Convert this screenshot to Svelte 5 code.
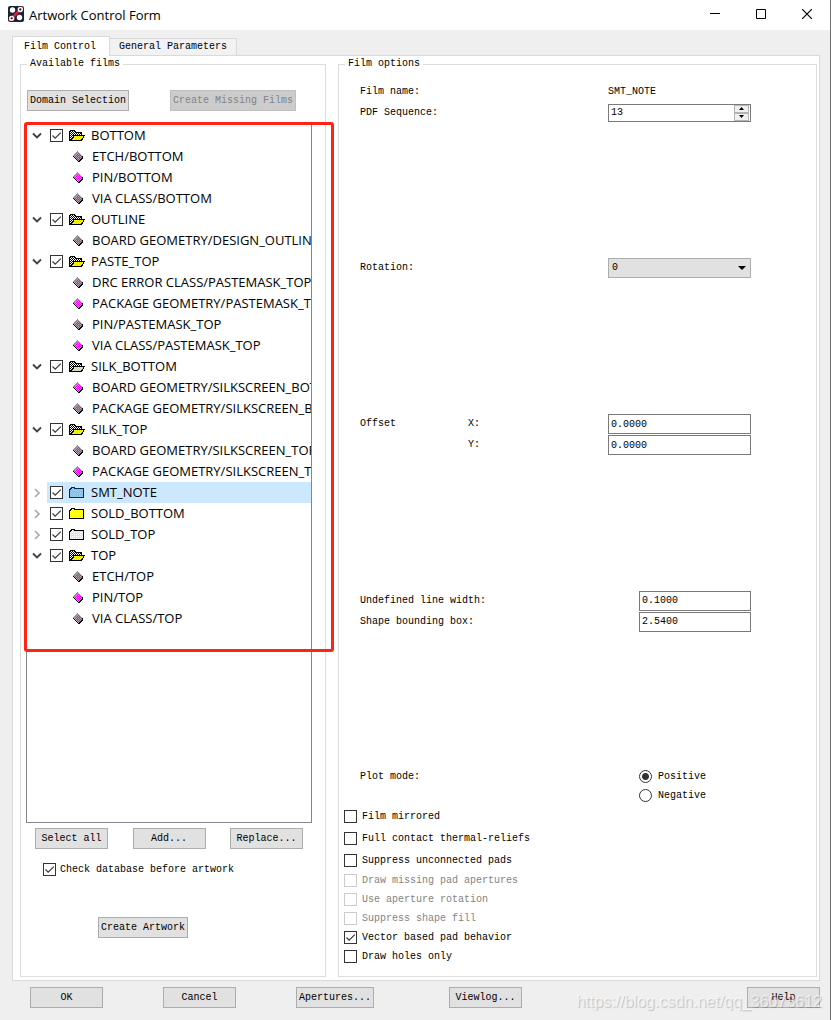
<script>
  let films = $state([
    { name: 'BOTTOM', open: true, checked: true, layers: ['ETCH/BOTTOM', 'PIN/BOTTOM', 'VIA CLASS/BOTTOM'] },
    { name: 'OUTLINE', open: true, checked: true, layers: ['BOARD GEOMETRY/DESIGN_OUTLINE'] },
    { name: 'PASTE_TOP', open: true, checked: true, layers: ['DRC ERROR CLASS/PASTEMASK_TOP', 'PACKAGE GEOMETRY/PASTEMASK_TOP', 'PIN/PASTEMASK_TOP', 'VIA CLASS/PASTEMASK_TOP'] },
    { name: 'SILK_BOTTOM', open: true, checked: true, layers: ['BOARD GEOMETRY/SILKSCREEN_BOTTOM', 'PACKAGE GEOMETRY/SILKSCREEN_BOTTOM'] },
    { name: 'SILK_TOP', open: true, checked: true, layers: ['BOARD GEOMETRY/SILKSCREEN_TOP', 'PACKAGE GEOMETRY/SILKSCREEN_TOP'] },
    { name: 'SMT_NOTE', open: false, checked: true, layers: [] },
    { name: 'SOLD_BOTTOM', open: false, checked: true, layers: [] },
    { name: 'SOLD_TOP', open: false, checked: true, layers: [] },
    { name: 'TOP', open: true, checked: true, layers: ['ETCH/TOP', 'PIN/TOP', 'VIA CLASS/TOP'] }
  ]);
  let selected = $state('SMT_NOTE');
  let sequence = $state(13);
  let plotMode = $state('Positive');
  let options = $state([
    { label: 'Film mirrored', checked: false, disabled: false, tall: true },
    { label: 'Full contact thermal-reliefs', checked: false, disabled: false, tall: true },
    { label: 'Suppress unconnected pads', checked: false, disabled: false, tall: true },
    { label: 'Draw missing pad apertures', checked: false, disabled: true },
    { label: 'Use aperture rotation', checked: false, disabled: true },
    { label: 'Suppress shape fill', checked: false, disabled: true },
    { label: 'Vector based pad behavior', checked: true, disabled: false },
    { label: 'Draw holes only', checked: false, disabled: false }
  ]);
</script>

<svg class="defs" width="0" height="0" aria-hidden="true">
  <defs>
    <pattern id="dither-back" width="2" height="2" patternUnits="userSpaceOnUse">
      <rect width="2" height="2" fill="#000" /><rect width="1" height="1" fill="#fff" /><rect x="1" y="1" width="1" height="1" fill="#fff" />
    </pattern>
    <pattern id="dither-open" width="2" height="2" patternUnits="userSpaceOnUse">
      <rect width="2" height="2" fill="#c8c8b4" /><rect width="1" height="1" fill="#ffff00" /><rect x="1" y="1" width="1" height="1" fill="#ffff00" />
    </pattern>
    <pattern id="dither-closed" width="2" height="2" patternUnits="userSpaceOnUse">
      <rect width="2" height="2" fill="#fff" /><rect width="1" height="1" fill="#ffff00" /><rect x="1" y="1" width="1" height="1" fill="#ffff00" />
    </pattern>
    <pattern id="dither-selected" width="2" height="2" patternUnits="userSpaceOnUse">
      <rect width="2" height="2" fill="#99ccee" /><rect width="1" height="1" fill="#99cc66" /><rect x="1" y="1" width="1" height="1" fill="#99cc66" />
    </pattern>
    <pattern id="dither-layer" width="2" height="2" patternUnits="userSpaceOnUse">
      <rect width="2" height="2" fill="#ff00ff" /><rect width="1" height="1" fill="#b4a4b4" /><rect x="1" y="1" width="1" height="1" fill="#b4a4b4" />
    </pattern>
  </defs>
</svg>

<div class="window">
  <header class="titlebar">
    <svg width="16" height="16" viewBox="0 0 16 16" aria-hidden="true">
      <rect width="16" height="16" rx="2" fill="#1d2333" />
      <path d="M1 15L15 1" stroke="#d8203c" stroke-width="2.500" fill="none" />
      <circle cx="4.500" cy="4" r="2.700" fill="#fff" />
      <circle cx="12.300" cy="3.500" r="1.900" fill="#1d2333" stroke="#fff" stroke-width="1.500" />
      <circle cx="3.700" cy="12.300" r="1.900" fill="#1d2333" stroke="#fff" stroke-width="1.500" />
      <circle cx="11.500" cy="11.500" r="2.700" fill="#fff" />
    </svg>
    <h1>Artwork Control Form</h1>
    <div class="controls">
      <button aria-label="Minimize"><svg width="10" height="10"><path d="M0 4.500H10" stroke="#000" /></svg></button>
      <button aria-label="Maximize"><svg width="10" height="10"><path d="M.5 .5H9.500V9.500H.5Z" stroke="#000" fill="none" /></svg></button>
      <button aria-label="Close"><svg width="10" height="10"><path d="M0 0L10 10M10 0L0 10" stroke="#000" stroke-width="1.200" /></svg></button>
    </div>
  </header>

  <main>
    <nav class="tabs" aria-label="Sections">
      <button class="tab active">Film Control</button>
      <button class="tab">General Parameters</button>
    </nav>

    <div class="panel">
      <fieldset class="films">
        <legend>Available films</legend>
        <div class="top-actions">
          <button class="btn">Domain Selection</button>
          <button class="btn" disabled>Create Missing Films</button>
        </div>

        <div class="tree-wrap">
          <ul class="tree">
            {#each films as film}
              <li>
                <div class="film">
                  <button class="twisty" aria-label={film.open ? 'Collapse' : 'Expand'} onclick={() => (film.open = !film.open)}>
                    <svg width="10" height="10" viewBox="0 0 10 10">
                      {#if film.open}
                        <path d="M1 2.500L5 6.500L9 2.500" fill="none" stroke="#404040" stroke-width="1.800" />
                      {:else}
                        <path d="M3 1L7 5L3 9" fill="none" stroke="#a6a6a6" stroke-width="1.600" />
                      {/if}
                    </svg>
                  </button>
                  <div class="item" class:selected={film.name === selected}>
                    <input type="checkbox" aria-label={film.name} bind:checked={film.checked} />
                    <svg width="16" height="14" viewBox="0 0 16 14" shape-rendering="crispEdges" aria-hidden="true">
                      {#if film.open}
                        <path d="M.5 11.500V2.500H1.500V1.500H5.500V2.500H6.500V3.500H12.500V6.500H5L1 11.500Z" fill="url(#dither-back)" stroke="#000" />
                        <path d="M1.500 11.500L5.500 6.500H15.500L12.500 11.500Z" fill="url(#dither-open)" stroke="#000" />
                      {:else}
                        <path d="M.5 11.500V3.500H1.500V2.500H2.500V1.500H5.500V2.500H6.500V2.500H14.500V11.500Z" fill={film.name === selected ? 'url(#dither-selected)' : 'url(#dither-closed)'} stroke={film.name === selected ? '#002a50' : '#000'} />
                      {/if}
                    </svg>
                    <button class="name" onclick={() => (selected = film.name)}>{film.name}</button>
                  </div>
                </div>
                {#if film.open}
                  <ul>
                    {#each film.layers as layer}
                      <li class="layer">
                        <svg width="10" height="12" viewBox="0 0 10 12" shape-rendering="crispEdges" aria-hidden="true">
                          <path d="M0 4L5 9L9 5H10V7L6 11H5L0 6Z" fill="#000" />
                          <path d="M0 4L4 0L9 5V6L5 10L0 5Z" fill="url(#dither-layer)" />
                          <path d="M0 4L4 0L5 1L1 5Z" fill="#909090" />
                        </svg>
                        <span>{layer}</span>
                      </li>
                    {/each}
                  </ul>
                {/if}
              </li>
            {/each}
          </ul>
          <div class="highlight"></div>
        </div>

        <div class="list-actions">
          <button class="btn std">Select all</button>
          <button class="btn std">Add...</button>
          <button class="btn std">Replace...</button>
        </div>
        <label class="check database"><input type="checkbox" checked />Check database before artwork</label>
        <button class="btn create">Create Artwork</button>
      </fieldset>

      <fieldset class="options">
        <legend>Film options</legend>
        <div class="sections">
          <div class="section">
            <span class="caption">Film name:</span>
            <span class="value">SMT_NOTE</span>
            <label class="caption" for="sequence">PDF Sequence:</label>
            <div class="value spin">
              <input id="sequence" type="number" bind:value={sequence} />
              <div class="steps">
                <button aria-label="Increase" onclick={() => sequence++}><svg width="5" height="3"><path d="M0 3L2.500 0L5 3Z" /></svg></button>
                <button aria-label="Decrease" onclick={() => sequence--}><svg width="5" height="3"><path d="M0 0L2.500 3L5 0Z" /></svg></button>
              </div>
            </div>
          </div>

          <div class="section">
            <label class="caption" for="rotation">Rotation:</label>
            <div class="value select">
              <select id="rotation"><option>0</option><option>90</option><option>180</option><option>270</option></select>
              <svg width="8" height="4" aria-hidden="true"><path d="M0 0H8L4 4Z" /></svg>
            </div>
          </div>

          <div class="section">
            <span>Offset</span>
            <label class="axis" for="offset-x">X:</label>
            <input class="value" id="offset-x" type="text" value="0.0000" />
            <label class="axis" for="offset-y">Y:</label>
            <input class="value" id="offset-y" type="text" value="0.0000" />
          </div>

          <div class="section">
            <label class="caption" for="line-width">Undefined line width:</label>
            <input class="value narrow" id="line-width" type="text" value="0.1000" />
            <label class="caption" for="bounding">Shape bounding box:</label>
            <input class="value narrow" id="bounding" type="text" value="2.5400" />
          </div>

          <div class="section plot">
            <span class="caption">Plot mode:</span>
            {#each ['Positive', 'Negative'] as mode}
              <label class="value narrow radio"><input type="radio" name="plot" value={mode} bind:group={plotMode} />{mode}</label>
            {/each}
          </div>
        </div>

        <div class="checks">
          {#each options as option}
            <label class="check" class:tall={option.tall} class:disabled={option.disabled}>
              <input type="checkbox" bind:checked={option.checked} disabled={option.disabled} />{option.label}
            </label>
          {/each}
        </div>
      </fieldset>
    </div>
  </main>

  <footer>
    <button class="btn std">OK</button>
    <button class="btn std">Cancel</button>
    <button class="btn">Apertures...</button>
    <button class="btn std viewlog">Viewlog...</button>
    <button class="btn std help">Help</button>
    <span class="watermark">https://blog.csdn.net/qq_36073612</span>
  </footer>
</div>

<style>
  :global(body) { margin: 0; background: #efefef; }
  .defs { position: absolute; }
  .window {
    box-sizing: border-box;
    min-height: 100vh;
    display: flex;
    flex-direction: column;
    background: #efefef;
    border-right: 1px solid #6e6e6e;
    color: #000;
    font: 10px/16px "Liberation Mono", "Courier New", monospace;
  }
  button, input, select { box-sizing: border-box; margin: 0; font: inherit; color: inherit; }
  button { border: 0; padding: 0; background: none; }
  ul { list-style: none; margin: 0; padding: 0; }

  .titlebar { display: flex; align-items: center; height: 30px; padding-left: 8px; background: #fff; }
  .titlebar > svg { margin: 0 5px 2px 0; }
  h1 { margin: 0; flex: 1; font: 400 13px/28px "Open Sans", "Segoe UI", sans-serif; }
  .controls { display: flex; align-self: flex-start; }
  .controls button { display: grid; place-items: center; width: 46px; height: 28px; }

  main { flex: 1; display: flex; flex-direction: column; padding: 6px 10px 0 12px; }
  .tabs { display: flex; align-items: flex-end; height: 19px; }
  .tab { height: 17px; padding: 0 9px; background: #f2f2f2; border: 1px solid #d9d9d9; border-bottom: 0; border-left: 0; }
  .tab.active { height: 20px; padding: 0 13px 0 11px; margin-bottom: -1px; background: #fff; border-left: 1px solid #d9d9d9; z-index: 1; }
  .panel {
    flex: 1;
    display: grid;
    grid-template-columns: 306px 1fr;
    gap: 12px;
    padding: 0 2px 3px 7px;
    background: #fff;
    border: 1px solid #d9d9d9;
  }
  fieldset { display: flex; flex-direction: column; min-width: 0; margin: 0; border: 1px solid #dcdcdc; }
  legend { margin-left: 1px; padding: 0 3px; }
  .films { padding: 18px 13px 38px 5px; }
  .options { padding: 9px 5px 10px; }

  .btn { height: 21px; padding: 0 2px; background: #e1e1e1; border: 1px solid #adadad; white-space: nowrap; }
  .btn:disabled { background: #ccc; border-color: #bfbfbf; color: #838383; }
  .std { width: 73px; }
  .top-actions { display: flex; gap: 41px; padding-left: 1px; margin-bottom: 13px; }
  .list-actions { display: flex; justify-content: space-between; padding: 5px 9px 14px; }
  .database { margin: 0 0 41px 17px; }
  .create { align-self: flex-start; margin-left: 72px; }

  .tree-wrap { position: relative; flex: 1; display: flex; }
  .tree { flex: 1; min-width: 0; overflow: hidden; border: 1px solid #828790; font: 13px/21px "Open Sans", "Segoe UI", sans-serif; white-space: nowrap; }
  .highlight { position: absolute; left: -2px; right: -22px; top: -2px; height: 530px; box-sizing: border-box; border: 3px solid #ff2314; border-radius: 3px; pointer-events: none; }
  .film { display: flex; height: 21px; }
  .twisty { display: grid; place-items: center; width: 20px; }
  .item { flex: 1; display: flex; align-items: center; gap: 6px; padding-left: 3px; }
  .item.selected { background: #cce8ff; }
  .layer { display: flex; align-items: center; gap: 9px; height: 21px; padding-left: 46px; }
  .layer svg, .item svg { flex: none; }

  input[type="checkbox"] { appearance: none; flex: none; width: 13px; height: 13px; border: 1px solid #333; background: #fff; }
  input[type="checkbox"]:checked {
    background: #fff url("data:image/svg+xml,%3Csvg xmlns='http://www.w3.org/2000/svg' viewBox='0 0 11 11'%3E%3Cpath d='M1.500 5.500L4.200 8.200L9.800 2.600' fill='none' stroke='%23404040' stroke-width='1.300'/%3E%3C/svg%3E") center / 11px 11px no-repeat;
  }
  input[type="checkbox"]:disabled { border-color: #ccc; }
  .check { display: flex; align-items: center; gap: 4px; line-height: 13px; }
  .checks .check { height: 19px; gap: 5px; }
  .checks .tall { height: 22px; }
  .disabled { color: #838383; }

  .sections { flex: 1; display: flex; flex-direction: column; justify-content: space-between; gap: 8px; padding: 0 60px 0 16px; }
  .section { display: grid; grid-template-columns: 108px 1fr 143px; grid-auto-rows: 21px; align-items: center; }
  .plot { grid-auto-rows: 19px; }
  .caption { grid-column: 1 / 3; }
  .axis { grid-column: 2; }
  .value { grid-column: 3; }
  .narrow { justify-self: end; width: 112px; }
  input[type="text"] { height: 20px; padding: 0 2px; border: 1px solid #7a7a7a; background: #fff; }
  .section input[type="text"]:not(.narrow) { width: 100%; }
  .spin { display: flex; height: 18px; box-sizing: border-box; border: 1px solid #7a7a7a; }
  .spin input { flex: 1; min-width: 0; border: 0; padding: 0 2px; appearance: textfield; }
  .spin input::-webkit-inner-spin-button { appearance: none; }
  .steps { display: flex; flex-direction: column; width: 15px; padding-right: 1px; }
  .steps button { flex: 1; display: grid; place-items: center; background: #f0f0f0; border: 1px solid #b4b4b4; }
  .select { position: relative; display: flex; }
  select { flex: 1; height: 20px; appearance: none; padding: 0 3px; background: #e1e1e1; border: 1px solid #adadad; border-radius: 0; }
  .select svg { position: absolute; right: 5px; top: 8px; pointer-events: none; }
  .radio { display: flex; align-items: center; gap: 6px; }
  input[type="radio"] { appearance: none; width: 13px; height: 13px; border: 1px solid #333; border-radius: 50%; background: #fff; }
  input[type="radio"]:checked { background: radial-gradient(circle, #333 3px, #fff 4px); }

  footer { position: relative; display: flex; padding: 6px 10px 12px 30px; }
  footer .btn + .btn { margin-left: 60px; }
  footer .btn + .viewlog { margin-left: 75px; }
  footer .btn + .help { margin-left: auto; }
  .watermark { position: absolute; right: 8px; top: 11px; font: 16px/20px "Liberation Sans", Arial, sans-serif; color: rgba(255, 255, 255, 0.6); text-shadow: 1px 1px 1px rgba(0, 0, 0, 0.2); pointer-events: none; }
</style>
